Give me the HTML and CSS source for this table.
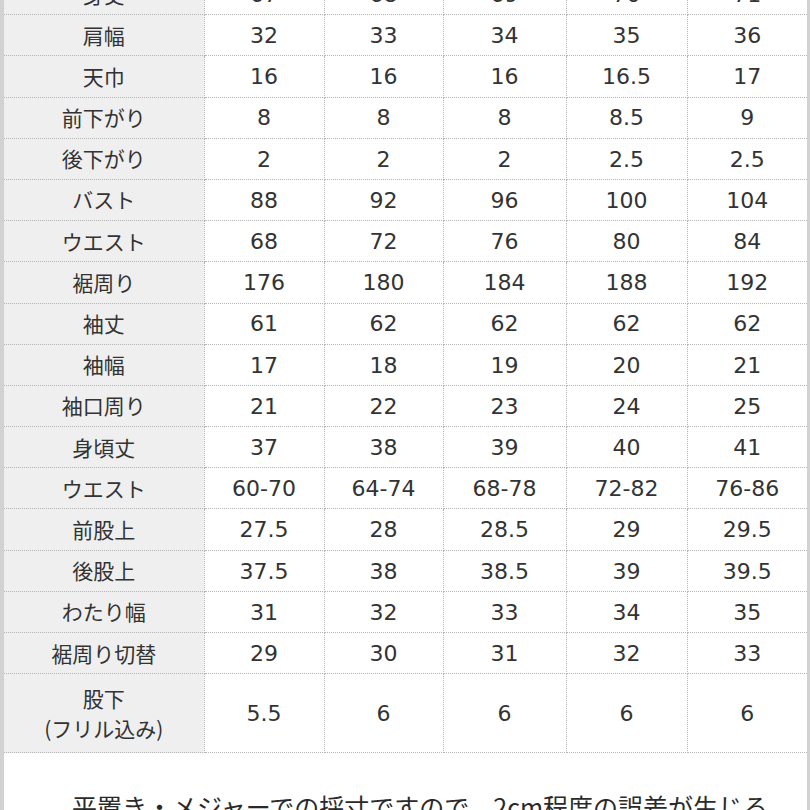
FILE: index.html
```html
<!DOCTYPE html>
<html lang="ja">
<head>
<meta charset="utf-8">
<link rel="stylesheet" href="styles.css">
</head>
<body>
<div class="frame">
  <table class="sizes">
    <colgroup>
      <col class="c-label"><col class="c1"><col class="c2"><col class="c3"><col class="c4"><col class="c5">
    </colgroup>
    <tbody>
      <tr><th>身丈</th><td>67</td><td>68</td><td>69</td><td>70</td><td>71</td></tr>
      <tr><th>肩幅</th><td>32</td><td>33</td><td>34</td><td>35</td><td>36</td></tr>
      <tr><th>天巾</th><td>16</td><td>16</td><td>16</td><td>16.5</td><td>17</td></tr>
      <tr><th>前下がり</th><td>8</td><td>8</td><td>8</td><td>8.5</td><td>9</td></tr>
      <tr><th>後下がり</th><td>2</td><td>2</td><td>2</td><td>2.5</td><td>2.5</td></tr>
      <tr><th>バスト</th><td>88</td><td>92</td><td>96</td><td>100</td><td>104</td></tr>
      <tr><th>ウエスト</th><td>68</td><td>72</td><td>76</td><td>80</td><td>84</td></tr>
      <tr><th>裾周り</th><td>176</td><td>180</td><td>184</td><td>188</td><td>192</td></tr>
      <tr><th>袖丈</th><td>61</td><td>62</td><td>62</td><td>62</td><td>62</td></tr>
      <tr><th>袖幅</th><td>17</td><td>18</td><td>19</td><td>20</td><td>21</td></tr>
      <tr><th>袖口周り</th><td>21</td><td>22</td><td>23</td><td>24</td><td>25</td></tr>
      <tr><th>身頃丈</th><td>37</td><td>38</td><td>39</td><td>40</td><td>41</td></tr>
      <tr><th>ウエスト</th><td>60-70</td><td>64-74</td><td>68-78</td><td>72-82</td><td>76-86</td></tr>
      <tr><th>前股上</th><td>27.5</td><td>28</td><td>28.5</td><td>29</td><td>29.5</td></tr>
      <tr><th>後股上</th><td>37.5</td><td>38</td><td>38.5</td><td>39</td><td>39.5</td></tr>
      <tr><th>わたり幅</th><td>31</td><td>32</td><td>33</td><td>34</td><td>35</td></tr>
      <tr><th>裾周り切替</th><td>29</td><td>30</td><td>31</td><td>32</td><td>33</td></tr>
      <tr class="tall"><th>股下<br>(フリル込み)</th><td>5.5</td><td>6</td><td>6</td><td>6</td><td>6</td></tr>
    </tbody>
  </table>
  <p class="note">平置き・メジャーでの採寸ですので、2cm程度の誤差が生じる場合がございます。</p>
</div>
</body>
</html>
```

FILE: styles.css
```css
html, body {
  margin: 0;
  padding: 0;
  background: #ffffff;
}

.frame {
  width: 810px;
  height: 810px;
  overflow: hidden;
  box-sizing: border-box;
  border-left: 4px solid #d2d2d2;
  border-right: 3px solid #d2d2d2;
  background: #ffffff;
  font-family: "DejaVu Sans", "Noto Sans CJK JP", sans-serif;
  color: #333333;
}

.sizes {
  width: 803px;
  margin-top: -26px;
  border-collapse: collapse;
  table-layout: fixed;
  font-size: 22px;
}

.c-label { width: 200px; }
.c1 { width: 120px; }
.c2 { width: 119px; }
.c3 { width: 123px; }
.c4 { width: 121px; }
.c5 { width: 120px; }

.sizes th,
.sizes td {
  height: 40.2px;
  padding: 0;
  text-align: center;
  vertical-align: middle;
  border: 1px dotted #b4b4b4;
  font-weight: normal;
  line-height: 1.2;
}

.sizes td {
  height: 38.2px;
  padding-top: 2px;
}

.sizes th {
  background: #efefef;
  font-family: "Noto Sans CJK JP", "DejaVu Sans", sans-serif;
  font-size: 21px;
}

.sizes tr:first-child th,
.sizes tr:first-child td {
  border-top: none;
}

.sizes th:first-child { border-left: none; }
.sizes td:last-child { border-right: none; }

.sizes .tall th {
  height: 78px;
  line-height: 30px;
}

.sizes .tall td {
  height: 76px;
}

.note {
  width: 702px;
  margin: 0;
  padding: 36px 0 0 68px;
  font-family: "Noto Sans CJK JP", sans-serif;
  font-size: 25px;
  line-height: 1.4;
  color: #2a2a2a;
}
```
